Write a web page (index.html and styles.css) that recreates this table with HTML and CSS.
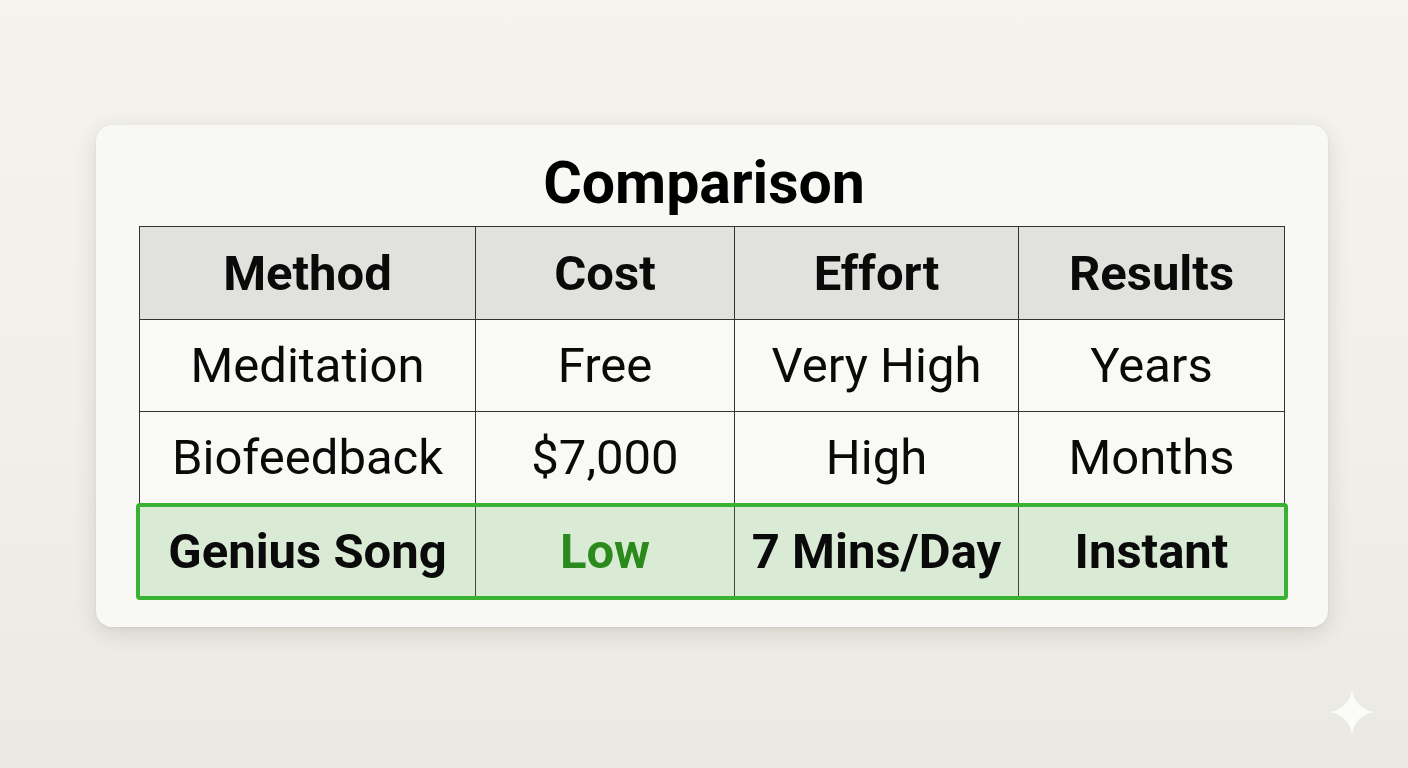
FILE: index.html
```html
<!DOCTYPE html>
<html lang="en">
<head>
<meta charset="utf-8">
<title>Comparison</title>
<link rel="stylesheet" href="styles.css">
</head>
<body>
<div class="card">
  <h1 class="title">Comparison</h1>
  <div class="table">
    <div class="row head">
      <div class="cell">Method</div>
      <div class="cell">Cost</div>
      <div class="cell">Effort</div>
      <div class="cell">Results</div>
    </div>
    <div class="row">
      <div class="cell">Meditation</div>
      <div class="cell">Free</div>
      <div class="cell">Very High</div>
      <div class="cell">Years</div>
    </div>
    <div class="row">
      <div class="cell">Biofeedback</div>
      <div class="cell">$7,000</div>
      <div class="cell">High</div>
      <div class="cell">Months</div>
    </div>
    <div class="row win">
      <div class="cell">Genius Song</div>
      <div class="cell low">Low</div>
      <div class="cell">7 Mins/Day</div>
      <div class="cell">Instant</div>
    </div>
  </div>
</div>
<svg class="sparkle" viewBox="0 0 24 24" aria-hidden="true">
  <path d="M12 0 C12.6 6.6 17.4 11.4 24 12 C17.4 12.6 12.6 17.4 12 24 C11.4 17.4 6.6 12.6 0 12 C6.6 11.4 11.4 6.6 12 0 Z"/>
</svg>
</body>
</html>
```

FILE: styles.css
```css
html, body {
  margin: 0;
  padding: 0;
}
body {
  width: 1408px;
  height: 768px;
  overflow: hidden;
  background: linear-gradient(180deg, #f5f3ee 0%, #f1efea 55%, #ebe9e3 100%);
  font-family: Roboto, "Liberation Sans", Arial, sans-serif;
  color: #0a0a0a;
  position: relative;
}
.card {
  margin: 125px 0 0 96px;
  width: 1232px;
  height: 502px;
  box-sizing: border-box;
  background: #f8f8f5;
  border-radius: 16px;
  box-shadow: 0 6px 22px rgba(60, 50, 30, 0.14), 0 1px 3px rgba(0,0,0,0.06);
  padding: 29px 43px 26px 43px;
  display: flex;
  flex-direction: column;
}
.title {
  margin: 0 0 14px 0;
  padding-right: 16px;
  font-size: 59px;
  line-height: 58px;
  font-weight: 700;
  text-align: center;
  color: #000;
}
.table {
  width: 1146px;
  display: flex;
  flex-direction: column;
}
.row {
  display: grid;
  grid-template-columns: 335px 259px 284px 266px;
  box-sizing: border-box;
  border: 1px solid #333;
  border-top: none;
  height: 92px;
  font-size: 49px;
  background: #f9f9f6;
}
.row.head {
  border-top: 1px solid #333;
  height: 94px;
  background: #e1e1de;
  font-weight: 700;
}
.cell {
  display: flex;
  align-items: center;
  justify-content: center;
  border-left: 1px solid #333;
  white-space: nowrap;
}
.cell:first-child {
  border-left: none;
}
.row.win {
  margin: -1px -3px 0 -3px;
  height: 97px;
  border: 4px solid #39b233;
  border-radius: 4px;
  background: #d9ebd4;
  font-weight: 700;
  font-size: 49px;
}
.row.win .cell {
  border-left-color: #444;
}
.row.win .cell:first-child {
  border-left: none;
}
.cell.low {
  color: #2a8b1c;
}
.sparkle {
  position: absolute;
  left: 1329px;
  top: 689px;
  width: 46px;
  height: 46px;
  fill: #fbfbf9;
}
```
